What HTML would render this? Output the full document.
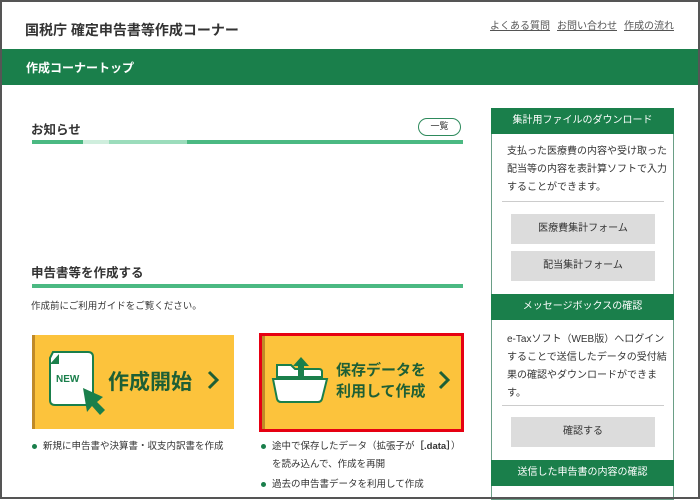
<!DOCTYPE html>
<html><head><meta charset="utf-8"><style>
*{margin:0;padding:0;box-sizing:border-box}
body{width:700px;height:500px;overflow:hidden;background:#fff;font-family:"Liberation Sans","Noto Sans CJK JP",sans-serif;color:#333;position:relative}
.frame{position:absolute;left:0;top:0;width:700px;height:499px;border:2px solid #555}
.a{position:absolute}
.title{left:25px;top:20px;font-size:14px;font-weight:bold;color:#333}
.links{top:17px;font-size:10px;color:#555;text-decoration:underline}
.gbar{left:2px;top:49px;width:696px;height:36px;background:#1a7f4b;color:#fff;font-weight:bold;font-size:12px;padding:10px 0 0 24px}
.h2{font-size:12.5px;font-weight:bold;color:#333}
.bar{height:4px;top:140px}
.card{background:#fcc33c}
.side{left:491px;top:108px;width:183px;border:1px solid #6a9e86;border-top:none;height:392px}
.ph{position:absolute;left:-1px;width:183px;height:26px;background:#1a7f4b;color:#fff;font-size:10px;text-align:center;line-height:26px}
.pt{position:absolute;left:15px;font-size:10px;line-height:18px;color:#333;width:163px}
.btn{position:absolute;left:19px;width:144px;height:30px;background:#dcdcdc;font-size:10px;text-align:center;line-height:30px;color:#333}
.hr{position:absolute;left:10px;width:162px;height:1px;background:#ccc}
.li{font-size:9.5px;color:#333;line-height:18px}
.b:before{content:"";display:inline-block;width:5px;height:5px;border-radius:50%;background:#1a7f4b;margin-right:6px;vertical-align:middle}
</style></head><body>
<div class="a title">国税庁 確定申告書等作成コーナー</div>
<div class="a links" style="left:490px">よくある質問</div>
<div class="a links" style="left:557px">お問い合わせ</div>
<div class="a links" style="left:624px">作成の流れ</div>
<div class="a gbar">作成コーナートップ</div>

<div class="a h2" style="left:31px;top:119px">お知らせ</div>
<div class="a" style="left:418px;top:118px;width:43px;height:18px;border:1.5px solid #2e8a5c;border-radius:9px;font-size:9px;text-align:center;line-height:15px">一覧</div>
<div class="a bar" style="left:32px;width:51px;background:#4bb982"></div>
<div class="a bar" style="left:83px;width:26px;background:#cfeedd"></div>
<div class="a bar" style="left:109px;width:78px;background:#9bdcbb"></div>
<div class="a bar" style="left:187px;width:276px;background:#4bb982"></div>

<div class="a h2" style="left:31px;top:262px">申告書等を作成する</div>
<div class="a" style="left:32px;top:284px;width:431px;height:4px;background:#4bb982"></div>
<div class="a" style="left:31px;top:298px;font-size:9.5px">作成前にご利用ガイドをご覧ください。</div>

<div class="a card" style="left:32px;top:335px;width:202px;height:94px;border-left:3px solid #c08a28"></div>
<svg class="a" style="left:45px;top:350px" width="70" height="70" viewBox="0 0 70 70">
<path d="M8 2 H43 Q48 2 48 7 V50 Q48 55 43 55 H10 Q5 55 5 50 V8 Z" fill="#fff" stroke="#1a7f4b" stroke-width="2"/>
<path d="M5 14 L14 4 L14 14 Z" fill="#1a7f4b"/>
<text x="11" y="32" font-family="Liberation Sans" font-weight="bold" font-size="10" fill="#1a7f4b">NEW</text>
<path d="M38 38 L42 62 L47 56 L55 65 L60 60 L52 52 L58 47 Z" fill="#1a7f4b"/>
</svg>
<div class="a" style="left:108px;top:366px;font-size:21px;font-weight:bold;color:#1e5f35">作成開始</div>
<svg class="a" style="left:206px;top:370px" width="14" height="20" viewBox="0 0 14 20"><polyline points="3,2 11,10 3,18" fill="none" stroke="#1e5f35" stroke-width="3"/></svg>

<div class="a card" style="left:259px;top:333px;width:205px;height:99px;border:3px solid #e60012"></div>
<div class="a" style="left:262px;top:336px;width:3px;height:93px;background:#c08a28"></div>
<svg class="a" style="left:271px;top:355px" width="60" height="50" viewBox="0 0 60 50">
<path d="M6 10 H20 L24 14 H48 Q51 14 51 17 V22 H6 Z" fill="#fff" stroke="#1a7f4b" stroke-width="2"/>
<path d="M2 24 H56 L51 44 Q50 47 47 47 H10 Q7 47 6 44 Z" fill="#fff" stroke="#1a7f4b" stroke-width="2"/>
<path d="M30 2 L38 11 H33 V24 H27 V11 H22 Z" fill="#1a7f4b"/>
</svg>
<div class="a" style="left:336px;top:360px;font-size:15px;font-weight:bold;color:#1e5f35;line-height:21px">保存データを<br>利用して作成</div>
<svg class="a" style="left:437px;top:370px" width="14" height="20" viewBox="0 0 14 20"><polyline points="3,2 11,10 3,18" fill="none" stroke="#1e5f35" stroke-width="3"/></svg>

<div class="a li b" style="left:32px;top:438px">新規に申告書や決算書・収支内訳書を作成</div>
<div class="a li b" style="left:261px;top:438px">途中で保存したデータ（拡張子が<b>［.data］</b>）</div>
<div class="a li" style="left:272px;top:456px;">を読み込んで、作成を再開</div>
<div class="a li b" style="left:261px;top:476px">過去の申告書データを利用して作成</div>

<div class="a side">
<div class="ph" style="top:0">集計用ファイルのダウンロード</div>
<div class="pt" style="top:35px">支払った医療費の内容や受け取った<br>配当等の内容を表計算ソフトで入力<br>することができます。</div>
<div class="hr" style="top:93px"></div>
<div class="btn" style="top:106px">医療費集計フォーム</div>
<div class="btn" style="top:143px">配当集計フォーム</div>
<div class="ph" style="top:186px">メッセージボックスの確認</div>
<div class="pt" style="top:223px">e-Taxソフト（WEB版）へログイン<br>することで送信したデータの受付結<br>果の確認やダウンロードができま<br>す。</div>
<div class="hr" style="top:297px"></div>
<div class="btn" style="top:309px">確認する</div>
<div class="ph" style="top:352px">送信した申告書の内容の確認</div>
</div>
<div class="frame"></div>
</body></html>
